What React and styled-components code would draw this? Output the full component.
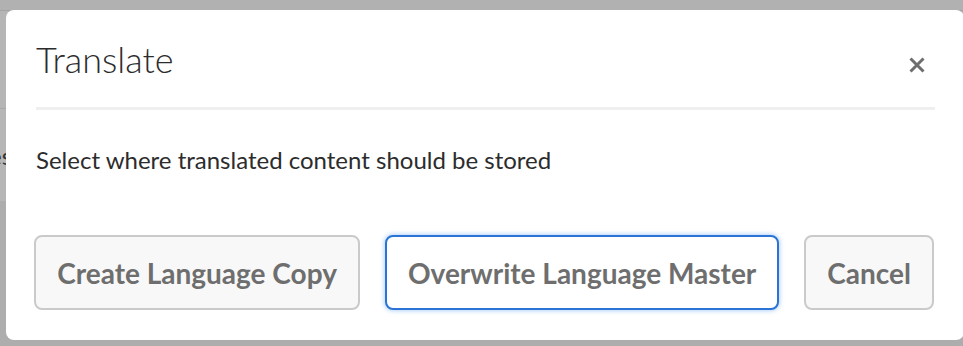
import React from "react";
import styled, { createGlobalStyle } from "styled-components";

const Global = createGlobalStyle`
  html, body { margin: 0; padding: 0; }
  body { width: 963px; height: 346px; overflow: hidden; background: #b3b3b3; font-family: Lato, "Liberation Sans", sans-serif; }
`;

const Page = styled.div`
  position: relative;
  width: 963px;
  height: 346px;
  overflow: hidden;
`;

const Backdrop = styled.div`
  display: flex;
  flex-direction: column;
  height: 100%;
`;

const BackRow = styled.div`
  height: ${(p) => p.$h}px;
  background: ${(p) => p.$bg};
  border-bottom: ${(p) => (p.$line ? `1px solid ${p.$line}` : "none")};
  box-sizing: border-box;
  display: flex;
  align-items: center;
  flex: ${(p) => (p.$grow ? 1 : "none")};
`;

const BackText = styled.span`
  font-size: 24px;
  color: #333;
  margin-left: -11px;
`;

const Dialog = styled.div`
  position: absolute;
  left: 6px;
  top: 10px;
  width: 958px;
  height: 330px;
  box-sizing: border-box;
  background: #fff;
  border-radius: 8px;
  padding: 0 30px 30px;
  display: flex;
  flex-direction: column;
`;

const Header = styled.div`
  height: 97px;
  display: flex;
  align-items: center;
  justify-content: space-between;
  border-bottom: 3px solid #efefef;
  margin-right: -1px;
`;

const Title = styled.h2`
  margin: 0;
  font-weight: 300;
  font-size: 36px;
  color: #2c2c2c;
  line-height: 1;
`;

const CloseButton = styled.button`
  border: none;
  background: none;
  padding: 0;
  width: 20px;
  height: 20px;
  display: flex;
  align-items: center;
  justify-content: center;
  margin: 12px 8px 0 0;
  cursor: pointer;
`;

const Body = styled.p`
  margin: 0;
  padding-top: 35px;
  font-size: 24px;
  color: #2c2c2c;
  line-height: 30px;
  flex: 1;
`;

const Footer = styled.div`
  display: flex;
  justify-content: flex-end;
  gap: 25px;
`;

const Button = styled.button`
  height: 75px;
  box-sizing: border-box;
  padding: 0 21px;
  border-radius: 8px;
  font-family: Lato, "Liberation Sans", sans-serif;
  font-weight: 700;
  font-size: 28px;
  color: #6e6e6e;
  background: ${(p) => (p.$focused ? "#fff" : "#f8f8f8")};
  border: 2px solid ${(p) => (p.$focused ? "#2b74d6" : "#cacaca")};
  box-shadow: ${(p) => (p.$focused ? "0 0 4px 1px rgba(38,128,235,0.35)" : "none")};
  cursor: pointer;
  white-space: nowrap;
`;

export default function App() {
  return (
    <Page>
      <Global />
      <Backdrop>
        <BackRow $h={11} $bg="#b1b1b1" $line="#a3a3a3" />
        <BackRow $h={98} $bg="#b5b5b5" $line="#a8a8a8" />
        <BackRow $h={92} $bg="#b6b6b6">
          <BackText>es</BackText>
        </BackRow>
        <BackRow $grow $bg="#adadad" />
      </Backdrop>
      <Dialog role="dialog" aria-labelledby="dlg-title">
        <Header>
          <Title id="dlg-title">Translate</Title>
          <CloseButton aria-label="Close">
            <svg width="16" height="16" viewBox="0 0 16 16">
              <path d="M1.5 1.5 L14.5 14.5 M14.5 1.5 L1.5 14.5" stroke="#6e6e6e" strokeWidth="3" strokeLinecap="butt" />
            </svg>
          </CloseButton>
        </Header>
        <Body>Select where translated content should be stored</Body>
        <Footer>
          <Button>Create Language Copy</Button>
          <Button $focused>Overwrite Language Master</Button>
          <Button>Cancel</Button>
        </Footer>
      </Dialog>
    </Page>
  );
}
